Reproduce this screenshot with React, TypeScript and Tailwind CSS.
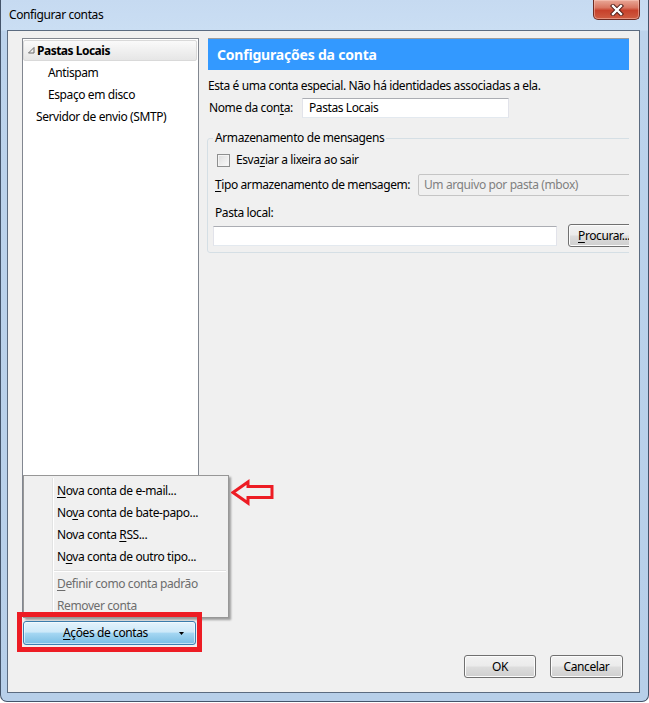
import type { ReactNode } from "react";

const U = ({ children }: { children: ReactNode }) => (
	<span className="underline underline-offset-[2px]">{children}</span>
);

const winButton =
	"flex items-center justify-center border border-[#707070] rounded-[3px] bg-[linear-gradient(to_bottom,#f2f2f2_0%,#ebebeb_48%,#dddddd_52%,#cfcfcf_100%)] shadow-[inset_0_0_0_1px_#fcfcfc]";

const TitleBar = () => (
	<div className="flex h-[30px] shrink-0 items-start justify-between">
		<div className="pl-[2px] pt-[7px] text-[12px] leading-[16px] text-black">
			Configurar contas
		</div>
		<div className="flex h-[20px] w-[47px] items-center justify-center rounded-b-[5px] border border-t-0 border-[#6e2b22] bg-[linear-gradient(to_bottom,#e9a897_0%,#d97662_40%,#c7412b_55%,#cf5d42_100%)] shadow-[inset_0_0_0_1px_rgba(255,210,200,0.45)]">
			<svg width="14" height="12" viewBox="0 0 14 12">
				<path d="M3 2 L11 10 M11 2 L3 10" stroke="#4a1a14" strokeWidth="4.2" strokeLinecap="square" />
				<path d="M3 2 L11 10 M11 2 L3 10" stroke="#ffffff" strokeWidth="2.4" strokeLinecap="square" />
			</svg>
		</div>
	</div>
);

const Tree = () => (
	<div className="flex-1 border border-[#828790] bg-white pt-[1px]">
		<div className="flex h-[22px] items-center pb-[1px]">
			<div className="mr-[1px] flex h-[21px] flex-1 items-center rounded-[2px] border border-[#d9d9d9] bg-[linear-gradient(to_bottom,#fafafa,#e6e6e6)]">
				<svg className="ml-[4px]" width="7" height="7" viewBox="0 0 7 7">
					<polygon points="6,0.5 6,6 0.5,6" fill="none" stroke="#6a6a6a" strokeWidth="1" />
				</svg>
				<span className="ml-[2px] font-bold tracking-[-0.5px]">Pastas Locais</span>
			</div>
		</div>
		<div className="flex h-[22px] items-center pl-[25px]">Antispam</div>
		<div className="flex h-[22px] items-center pl-[25px]">Espaço em disco</div>
		<div className="flex h-[22px] items-center pl-[13px]">Servidor de envio (SMTP)</div>
	</div>
);

const AccountPane = () => (
	<div className="ml-[8px] flex w-[422px] flex-col self-start overflow-hidden">
		<div className="ml-[1px] flex h-[32px] items-center border-t border-[#9c9c9c] bg-[#3399ff] pl-[9px] text-[14px] font-bold tracking-[-0.2px] text-white">
			Configurações da conta
		</div>
		<div className="mt-[8px] whitespace-nowrap pl-[1px]">
			Esta é uma conta especial. Não há identidades associadas a ela.
		</div>
		<div className="mt-[4px] flex h-[20px] items-center pl-[2px]">
			<span className="w-[93px] shrink-0">
				Nome da con<U>t</U>a:
			</span>
			<div className="flex h-[20px] w-[207px] items-center border border-[#abadb3] border-x-[#e2e3ea] border-b-[#e3e9ef] bg-white pl-[6px]">
				Pastas Locais
			</div>
		</div>
		<div className="relative mt-[20px] w-[450px] shrink-0 rounded-[3px] border border-[#d5dfe5] pb-[5px] pt-[13px]">
			<div className="absolute -top-[9px] left-[5px] whitespace-nowrap bg-[#f0f0f0] px-[2px]">
				Armazenamento de mensagens
			</div>
			<div className="flex h-[16px] items-center pl-[9px]">
				<div className="h-[13px] w-[13px] border border-[#8e8f8f] bg-[linear-gradient(135deg,#dcdcdc,#fbfbfb)] shadow-[inset_0_0_0_1px_#f4f4f4]" />
				<span className="ml-[6px]">
					Esva<U>z</U>iar a lixeira ao sair
				</span>
			</div>
			<div className="mt-[6px] flex h-[22px] items-center pl-[7px]">
				<span className="w-[203px] shrink-0 whitespace-nowrap">
					<U>T</U>ipo armazenamento de mensagem:
				</span>
				<div className="flex h-[22px] w-[230px] shrink-0 items-center rounded-[2px] border border-[#c5c5c5] bg-[#f0f0f0] pl-[5px] text-[#808080]">
					Um arquivo por pasta (mbox)
				</div>
			</div>
			<div className="mt-[9px] flex h-[16px] items-center pl-[7px]">Pasta local:</div>
			<div className="mt-[3px] flex h-[23px] items-center pl-[5px]">
				<div className="h-[20px] w-[344px] shrink-0 border border-[#abadb3] border-x-[#e2e3ea] border-b-[#e3e9ef] bg-white" />
				<div className={`${winButton} ml-[11px] h-[23px] w-[75px] shrink-0 justify-start pl-[9px]`}>
					<span className="whitespace-nowrap">
						<U>P</U>rocurar...
					</span>
				</div>
			</div>
		</div>
	</div>
);

const ActionsMenu = () => (
	<div className="absolute left-[15px] top-[444px] w-[206px] border border-[#979797] bg-[#f0f0f0] pt-[4px] shadow-[2px_2px_2px_rgba(0,0,0,0.35)]">
		<div className="absolute bottom-[2px] left-[28px] top-[2px] w-[2px] border-l border-r border-l-[#e2e3e3] border-r-white" />
		<div className="flex h-[22px] items-center pl-[33px]">
			<span>
				<U>N</U>ova conta de e-mail...
			</span>
		</div>
		<div className="flex h-[22px] items-center pl-[33px]">
			<span>
				No<U>v</U>a conta de bate-papo...
			</span>
		</div>
		<div className="flex h-[22px] items-center pl-[33px]">
			<span>
				Nova conta <U>R</U>SS...
			</span>
		</div>
		<div className="flex h-[22px] items-center pl-[33px]">
			<span>
				N<U>o</U>va conta de outro tipo...
			</span>
		</div>
		<div className="ml-[29px] mr-[2px] flex h-[5px] flex-col justify-center">
			<div className="h-[2px] border-b border-t border-b-white border-t-[#e0e0e0]" />
		</div>
		<div className="flex h-[22px] items-center pl-[33px] text-[#6d6d6d]">
			<span>
				<U>D</U>efinir como conta padrão
			</span>
		</div>
		<div className="flex h-[22px] items-center pl-[33px] text-[#6d6d6d]">
			<span>
				<U>R</U>emover conta
			</span>
		</div>
	</div>
);

export default function App() {
	return (
		<div className="relative h-[703px] w-[649px] overflow-hidden bg-white font-['Noto_Sans',sans-serif] text-[12px] leading-[16px] tracking-[-0.4px] text-black">
			<div className="flex h-[702px] w-[649px] flex-col rounded-b-[7px] border-x border-b border-[#44546a] bg-[linear-gradient(to_bottom,#c6daf1_0px,#cadef3_30px,#bcd3ec_31px,#b7cfe9_100%)] pb-[8px] pl-[6px] pr-[8px]">
				<TitleBar />
				<div className="relative flex min-h-0 flex-1 flex-col border border-[#5b6b80] bg-[#f0f0f0] pb-[14px] pt-[7px]">
					<div className="flex min-h-0 flex-1 pl-[14px]">
						<div className="flex w-[177px] shrink-0 flex-col">
							<Tree />
							<div className="ml-[1px] mt-[8px] flex h-[24px] w-[173px] items-center rounded-[3px] border border-[#3c7fb1] bg-[linear-gradient(to_bottom,#e4f3fc_0%,#cde9f9_45%,#a4d6f2_52%,#79bde3_100%)] shadow-[inset_0_0_0_1px_rgba(255,255,255,0.55)]">
								<span className="flex-1 pl-[8px] text-center">
									<U>A</U>ções de contas
								</span>
								<svg className="mr-[11px]" width="5" height="3" viewBox="0 0 5 3">
									<polygon points="0,0 5,0 2.5,3" fill="#000" />
								</svg>
							</div>
						</div>
						<AccountPane />
					</div>
					<div className="mt-[10px] flex justify-end gap-[14px] pr-[16px]">
						<div className={`${winButton} h-[23px] w-[72px]`}>OK</div>
						<div className={`${winButton} h-[23px] w-[73px]`}>Cancelar</div>
					</div>

					<ActionsMenu />
					<div className="absolute left-[9px] top-[581px] h-[40px] w-[185px] border-[5px] border-[#ed1c24]" />
					<svg className="absolute left-[223px] top-[448px]" width="44" height="27" viewBox="0 0 44 27">
						<polygon
							points="2,13.5 17,3 17,7.5 41,7.5 41,18.5 17,18.5 17,24"
							fill="none"
							stroke="#ed1c24"
							strokeWidth="3"
							strokeLinejoin="miter"
						/>
					</svg>
				</div>
			</div>
		</div>
	);
}
